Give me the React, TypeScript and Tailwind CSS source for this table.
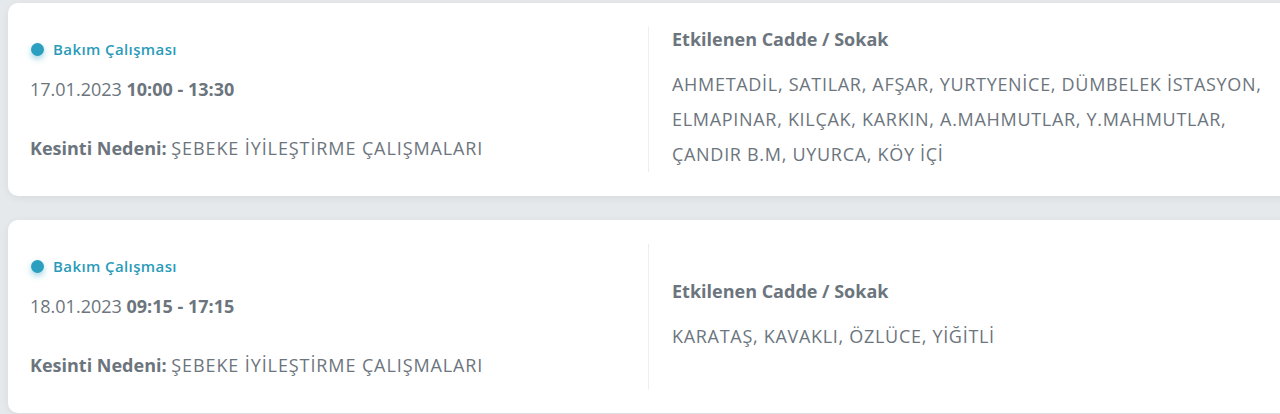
import React from "react";

type Outage = {
  type: string;
  date: string;
  time: string;
  reason: string;
  streets: string;
};

const outages: Outage[] = [
  {
    type: "Bakım Çalışması",
    date: "17.01.2023",
    time: "10:00 - 13:30",
    reason: "ŞEBEKE İYİLEŞTİRME ÇALIŞMALARI",
    streets:
      "AHMETADİL, SATILAR, AFŞAR, YURTYENİCE, DÜMBELEK İSTASYON, ELMAPINAR, KILÇAK, KARKIN, A.MAHMUTLAR, Y.MAHMUTLAR, ÇANDIR B.M, UYURCA, KÖY İÇİ",
  },
  {
    type: "Bakım Çalışması",
    date: "18.01.2023",
    time: "09:15 - 17:15",
    reason: "ŞEBEKE İYİLEŞTİRME ÇALIŞMALARI",
    streets: "KARATAŞ, KAVAKLI, ÖZLÜCE, YİĞİTLİ",
  },
];

function OutageCard({ item }: { item: Outage }) {
  return (
    <div className="flex items-stretch rounded-[10px] bg-white shadow-[0_2px_8px_rgba(0,0,0,0.06)] py-[24px]">
      <div className="w-[640px] shrink-0 min-h-[145px] pl-[22px] pr-4 flex flex-col justify-center">
        <div className="flex items-center gap-[9px] pl-[1px] h-5">
          <span className="w-[13px] h-[13px] rounded-full bg-[#2a9fc0] shadow-[0_3px_6px_rgba(42,159,192,0.45)]" />
          <span className="text-[15px] font-semibold tracking-[0.4px] text-[#2a9bb9]">{item.type}</span>
        </div>
        <div className="mt-[18px] text-[18px] text-[#6c757d] leading-[24px]">
          {item.date} <span className="font-bold">{item.time}</span>
        </div>
        <div className="mt-[35px] text-[18px] text-[#6c757d] leading-[24px]">
          <span className="font-bold">Kesinti Nedeni:</span>{" "}
          <span className="tracking-[0.9px]">{item.reason}</span>
        </div>
      </div>
      <div className="flex-1 min-h-[145px] border-l border-[#eceef0] pl-[23px] pr-6 flex flex-col justify-center">
        <div className="text-[18px] font-bold text-[#6c757d] leading-[24px]">Etkilenen Cadde / Sokak</div>
        <div className="mt-[16px] text-[18px] tracking-[0.7px] text-[#6c757d] leading-[35px] max-w-[600px]">
          {item.streets}
        </div>
      </div>
    </div>
  );
}

export default function App() {
  return (
    <div
      className="w-full h-[414px] overflow-hidden bg-[#e6e9eb]"
      style={{ fontFamily: '"Open Sans", "Noto Sans", sans-serif' }}
    >
      <div className="w-[1300px] pl-2 pt-[3px] flex flex-col gap-[24px]">
        {outages.map((o, i) => (
          <OutageCard key={i} item={o} />
        ))}
      </div>
    </div>
  );
}
